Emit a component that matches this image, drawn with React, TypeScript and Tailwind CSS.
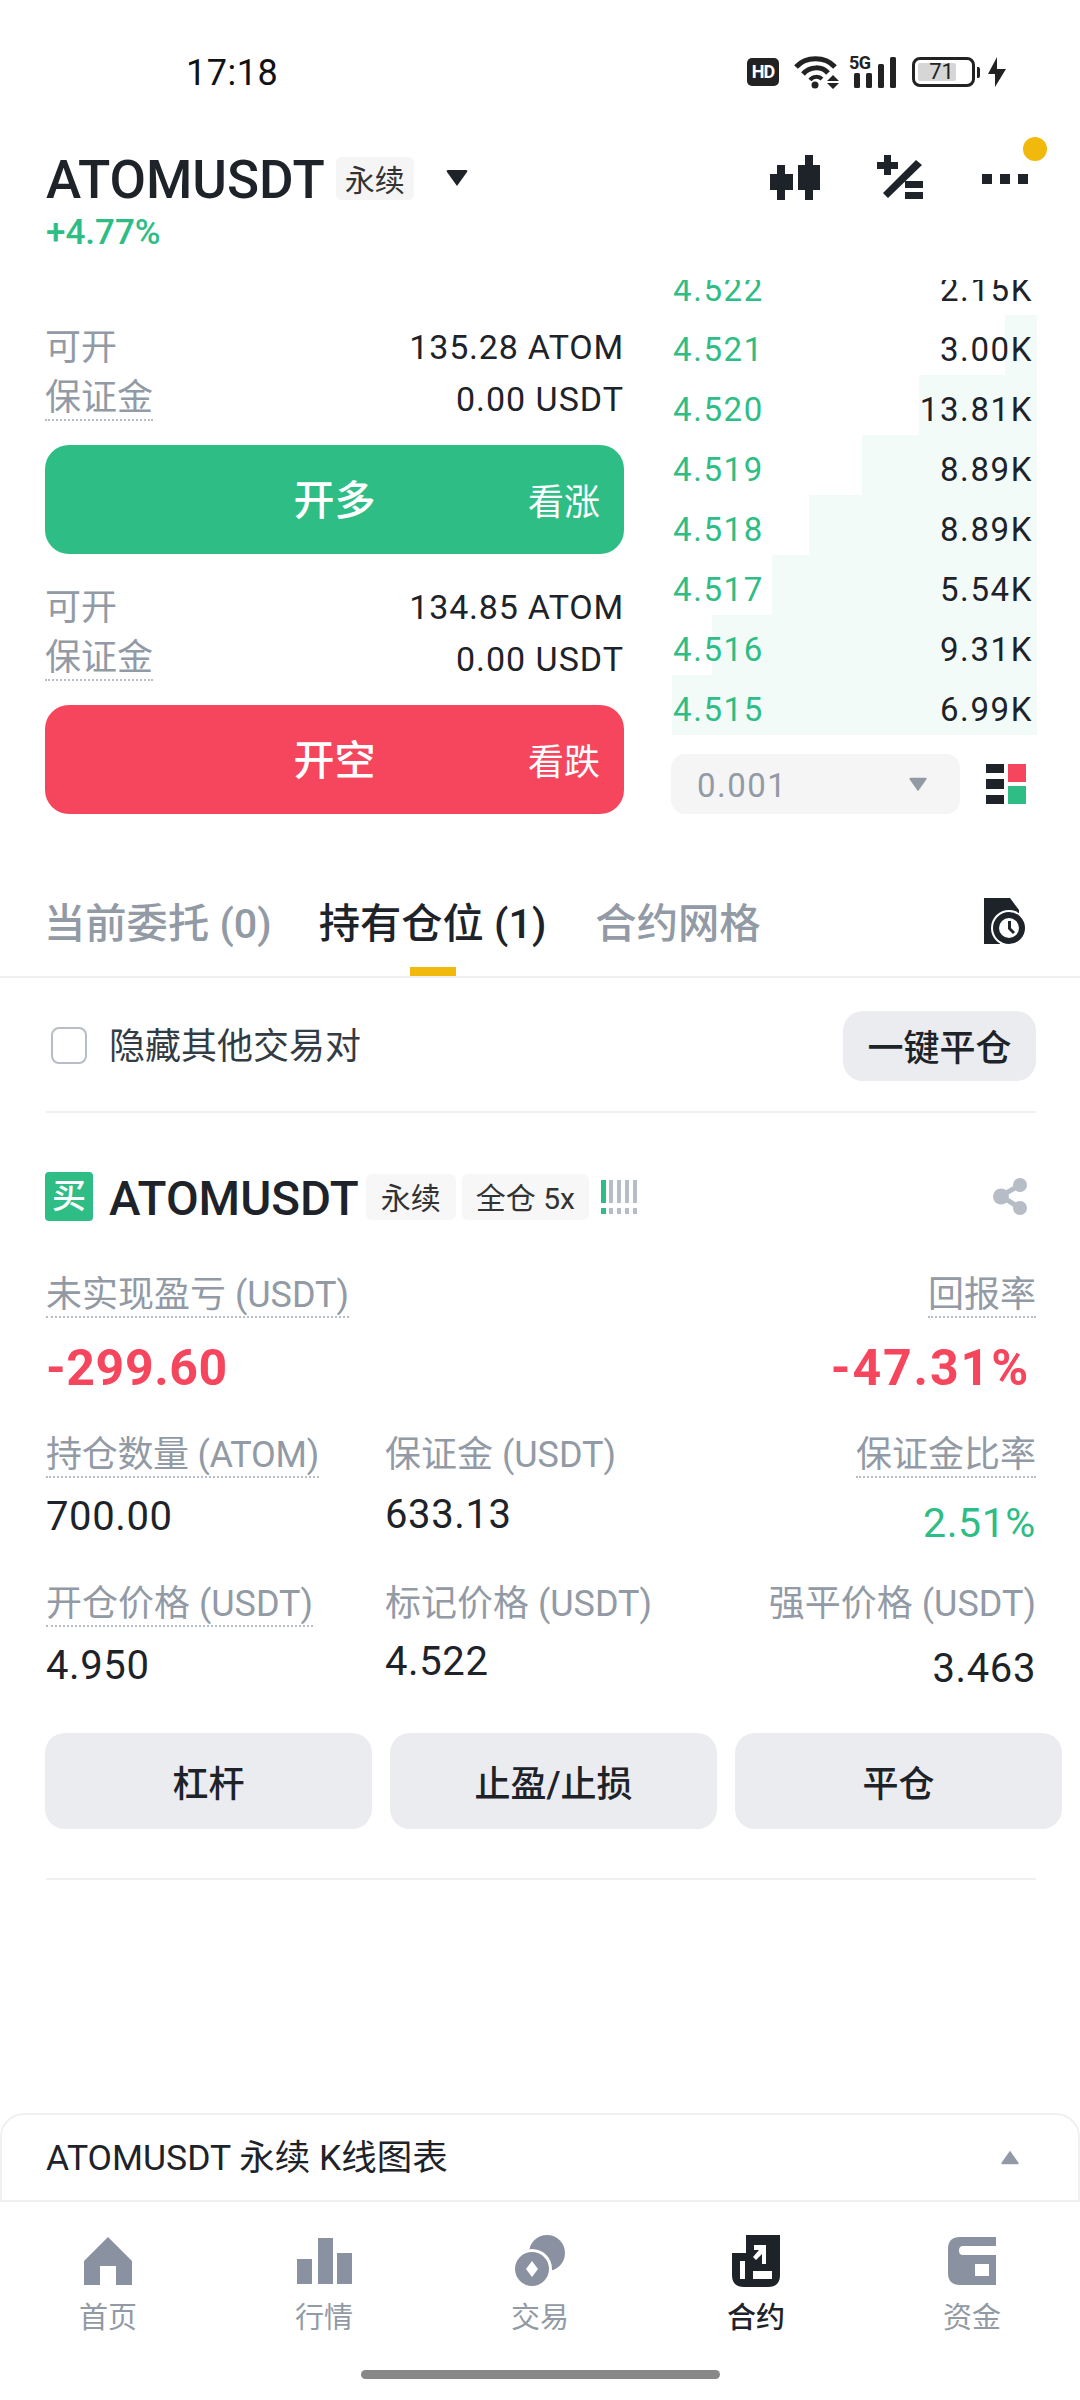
import React from "react";

const asks = [
  { p: "4.522", q: "2.15K", w: 0 },
  { p: "4.521", q: "3.00K", w: 32 },
  { p: "4.520", q: "13.81K", w: 118 },
  { p: "4.519", q: "8.89K", w: 175 },
  { p: "4.518", q: "8.89K", w: 228 },
  { p: "4.517", q: "5.54K", w: 265 },
  { p: "4.516", q: "9.31K", w: 325 },
  { p: "4.515", q: "6.99K", w: 365 },
];

function Label({ children, dotted = true }: { children: React.ReactNode; dotted?: boolean }) {
  return (
    <span className={`inline-block h-[48px] pt-[2px] text-[36px] leading-[46px] text-[#929aa5] whitespace-nowrap ${dotted ? "border-b-2 border-dotted border-[#b7bdc6]" : ""}`}>
      {children}
    </span>
  );
}

function Tri({ className, color, up = false }: { className: string; color: string; up?: boolean }) {
  return (
    <svg viewBox="0 0 24 18" className={className}>
      <path d={up ? "M12 1 22 15Q23 17 21 17H3Q1 17 2 15Z" : "M12 17 22 3Q23 1 21 1H3Q1 1 2 3Z"} fill={color} />
    </svg>
  );
}

function StatusBar() {
  return (
    <div className="h-[144px] shrink-0 flex items-center pl-[186px] pr-[74px] justify-between text-[#111]">
      <span className="text-[36px] leading-[44px] tracking-[0.5px] pt-[2px]">17:18</span>
      <div className="flex items-center">
        <span className="w-[32px] h-[28px] rounded-[5px] bg-[#222] text-white text-[18px] leading-[28px] font-bold text-center tracking-[-1px]">HD</span>
        <svg viewBox="0 0 46 34" className="w-[46px] h-[34px] ml-[15px]">
          <path d="M2 12C12 1 31 1 41 12" fill="none" stroke="#222" strokeWidth="5" />
          <path d="M9 19C16 11 28 11 34 18" fill="none" stroke="#222" strokeWidth="5" />
          <path d="M16 25C19 21 25 21 28 24" fill="none" stroke="#222" strokeWidth="4" />
          <circle cx="21" cy="30" r="3.5" fill="#222" />
          <path d="M39 20 45 26H33ZM33 28H45L39 34Z" fill="#222" />
        </svg>
        <div className="relative w-[48px] h-[32px] ml-[11px]">
          <span className="absolute left-[-2px] top-[-3px] text-[18px] leading-[19px] font-bold tracking-[-0.5px] text-[#222]">5G</span>
          <svg viewBox="0 0 48 32" className="w-[48px] h-[32px]">
            <rect x="3" y="17" width="6" height="15" rx="1.5" fill="#222" />
            <rect x="15" y="17" width="6" height="15" rx="1.5" fill="#222" />
            <rect x="27" y="8" width="6" height="24" rx="1.5" fill="#222" />
            <rect x="39" y="1" width="6" height="31" rx="1.5" fill="#222" />
          </svg>
        </div>
        <div className="relative w-[63px] h-[30px] ml-[13px] border-[3px] border-[#222] rounded-[8px] p-[3px]">
          <div className="w-[38px] h-full bg-[#d6d6d6] rounded-[2px]" />
          <span className="absolute inset-0 text-center text-[22px] leading-[24px] text-[#222] pr-[4px]">71</span>
          <span className="absolute right-[-8px] top-[7px] w-[3px] h-[11px] bg-[#222] rounded-r-[2px]" />
        </div>
        <svg viewBox="0 0 18 30" className="w-[18px] h-[30px] ml-[13px]">
          <path d="M9 0V12H18L7 30V17H0Z" fill="#222" />
        </svg>
      </div>
    </div>
  );
}

function Header() {
  return (
    <div className="h-[136px] shrink-0 pl-[46px] relative">
      <div className="flex items-center h-[68px]">
        <span className="text-[53px] leading-[68px] pt-[3px] font-medium text-[#1e2329]">ATOMUSDT</span>
        <span className="ml-[11px] w-[78px] h-[43px] rounded-[6px] bg-[#f5f5f5] text-[30px] leading-[43px] pt-[2px] text-center text-[#333]">永续</span>
        <Tri className="w-[24px] h-[18px] ml-[31px]" color="#1e2329" />
      </div>
      <div className="h-[40px] text-[35px] leading-[40px] pt-[1px] font-medium text-[#2ebd85]">+4.77%</div>
      <svg viewBox="0 0 60 50" className="absolute left-[770px] top-[11px] w-[60px] h-[50px]">
        <path d="M7 10H15V19H23V35H15V45H7V35H0V19H7ZM35 0H43V10H50V35H43V45H35V35H28V10H35Z" fill="#1e2329" />
      </svg>
      <svg viewBox="0 0 50 48" className="absolute left-[877px] top-[11px] w-[50px] h-[48px]">
        <path d="M7 0H14V7H21V14H14V20H7V14H0V7H7ZM39 5 45 10 11 43 6 38ZM28 26H46V33H28ZM28 37H46V44H28Z" fill="#1e2329" />
      </svg>
      <div className="absolute left-[982px] top-[30px] flex gap-[8px]">
        <span className="w-[10px] h-[10px] bg-[#1e2329]" />
        <span className="w-[10px] h-[10px] bg-[#1e2329]" />
        <span className="w-[10px] h-[10px] bg-[#1e2329]" />
      </div>
      <span className="absolute left-[1023px] top-[-7px] w-[24px] h-[24px] rounded-full bg-[#f0b90b]" />
    </div>
  );
}

function OpenBlock({ qty, action, hint, color }: { qty: string; action: string; hint: string; color: string }) {
  return (
    <div>
      <div className="flex justify-between items-center h-[52px]">
        <span className="text-[36px] pt-[2px] text-[#929aa5]">可开</span>
        <span className="text-[34px] tracking-[0.8px] pt-[1px] text-[#1e2329]">{qty}</span>
      </div>
      <div className="flex justify-between h-[52px]">
        <Label>保证金</Label>
        <span className="text-[34px] leading-[52px] tracking-[1px] text-[#1e2329]">0.00 USDT</span>
      </div>
      <div className={`relative h-[109px] mt-[20px] rounded-[24px] flex items-center justify-center text-white ${color}`}>
        <span className="text-[41px] pt-[4px] font-medium">{action}</span>
        <span className="absolute right-[24px] top-[34px] text-[36px] leading-[48px]">{hint}</span>
      </div>
    </div>
  );
}

function Trade() {
  return (
    <div className="h-[534px] shrink-0 flex pl-[45px] pr-[43px]">
      <div className="w-[579px] pt-[41px] flex flex-col gap-[27px]">
        <OpenBlock qty="135.28 ATOM" action="开多" hint="看涨" color="bg-[#2ebd85]" />
        <OpenBlock qty="134.85 ATOM" action="开空" hint="看跌" color="bg-[#f6465d]" />
      </div>
      <div className="w-[367px] ml-[46px]">
        <div className="h-[455px] overflow-hidden flex flex-col justify-end">
          {asks.map((r) => (
            <div key={r.p} className="relative h-[60px] shrink-0 flex items-center justify-between pl-[3px] pr-[4px] text-[33px] tracking-[1.6px]">
              <div className="absolute right-0 top-0 bottom-0 bg-[#f3fbf8]" style={{ width: r.w }} />
              <span className="relative text-[#2ebd85] mt-[9px]">{r.p}</span>
              <span className="relative text-[#1e2329] mt-[9px]">{r.q}</span>
            </div>
          ))}
        </div>
        <div className="flex items-center mt-[19px]">
          <div className="w-[289px] h-[60px] rounded-[14px] bg-[#f5f5f5] flex items-center justify-between pl-[26px] pr-[32px] ml-[1px]">
            <span className="text-[33px] pt-[3px] tracking-[1.5px] text-[#929aa5]">0.001</span>
            <Tri className="w-[20px] h-[15px]" color="#929aa5" />
          </div>
          <svg viewBox="0 0 40 40" className="w-[40px] h-[40px] ml-[26px]">
            <path d="M0 0H18V9H0ZM0 15H18V25H0ZM0 31H18V40H0Z" fill="#1e2329" />
            <rect x="22" y="0" width="18" height="18" fill="#f6465d" />
            <rect x="22" y="22" width="18" height="18" fill="#2ebd85" />
          </svg>
        </div>
      </div>
    </div>
  );
}

function Tabs() {
  const t = "text-[41.3px] leading-[52px] pt-[2px] font-medium whitespace-nowrap";
  return (
    <div className="h-[164px] shrink-0 border-b-2 border-[#f0f0f0] pt-[82px] pl-[44px] pr-[54px] flex items-start">
      <span className={`${t} text-[#929aa5]`}>当前委托 (0)</span>
      <div className="ml-[47px] flex flex-col items-center">
        <span className={`${t} text-[#1e2329]`}>持有仓位 (1)</span>
        <span className="mt-[17px] w-[46px] h-[9px] bg-[#f0b90b]" />
      </div>
      <span className={`ml-[49px] ${t} text-[#929aa5]`}>合约网格</span>
      <svg viewBox="0 0 42 46" className="ml-auto w-[42px] h-[46px] mt-[2px]">
        <path d="M0 0H26L35 12V40H0Z" fill="#1e2329" transform="translate(0 0)" />
        <path d="M0 46H16V40H0Z" fill="#1e2329" />
        <circle cx="25" cy="30" r="18" fill="#fff" />
        <circle cx="25" cy="30" r="16" fill="#1e2329" />
        <circle cx="25" cy="30" r="10" fill="#fff" />
        <path d="M24 23H27V30L31 34 29 36 24 31Z" fill="#1e2329" />
      </svg>
    </div>
  );
}

function PositionCard() {
  const val = "text-[40px] leading-[50px] tracking-[0.6px] text-[#1e2329]";
  return (
    <div className="pl-[46px] pr-[44px]">
      <div className="h-[135px] pt-[2px] flex items-center border-b-2 border-[#f0f0f0]">
        <span className="w-[36px] h-[37px] ml-[5px] rounded-[8px] border-2 border-[#b7bdc6]" />
        <span className="ml-[22px] text-[36px] pt-[3px] text-[#333b44]">隐藏其他交易对</span>
        <span className="ml-auto w-[193px] h-[70px] rounded-[20px] bg-[#eaecef] text-[36px] leading-[70px] pt-[3px] text-center font-medium text-[#1e2329]">一键平仓</span>
      </div>

      <div className="relative mt-[59px] h-[49px] flex items-center">
        <span className="ml-[-1px] w-[48px] h-[49px] rounded-[4px] bg-[#2ebd85] text-white text-[34px] leading-[49px] text-center font-medium">买</span>
        <span className="ml-[16px] text-[47.5px] pt-[4px] font-medium text-[#1e2329] leading-[56px]">ATOMUSDT</span>
        <span className="ml-[7px] w-[90px] h-[46px] rounded-[6px] bg-[#f7f7f7] text-[30px] leading-[46px] pt-[2px] text-center text-[#333]">永续</span>
        <span className="ml-[6px] w-[127px] h-[46px] rounded-[6px] bg-[#f7f7f7] text-[30px] leading-[46px] pt-[2px] text-center text-[#333]">全仓 5x</span>
        <svg viewBox="0 0 36 34" className="ml-[12px] w-[36px] h-[34px]">
          <path d="M0 0H5V23H0ZM0 28H5V34H0Z" fill="#2ebd85" />
          <path d="M8 0H12V23H8ZM8 28H12V34H8ZM16 0H20V23H16ZM16 28H20V34H16ZM24 0H28V23H24ZM24 28H28V34H24ZM32 0H36V23H32ZM32 28H36V34H32Z" fill="#b7bdc6" />
        </svg>
        <svg viewBox="0 0 35 37" className="absolute left-[947px] top-[6px] w-[35px] h-[37px]">
          <path d="M27 7 8 18 27 30" fill="none" stroke="#b7bdc6" strokeWidth="5" />
          <circle cx="27" cy="7" r="7" fill="#b7bdc6" />
          <circle cx="8" cy="18.5" r="8" fill="#b7bdc6" />
          <circle cx="27" cy="30" r="7" fill="#b7bdc6" />
        </svg>
      </div>

      <div className="mt-[49px] flex justify-between">
        <Label>未实现盈亏 (USDT)</Label>
        <Label>回报率</Label>
      </div>
      <div className="mt-[20px] h-[60px] flex justify-between text-[50px] leading-[60px] font-bold text-[#f6465d] tracking-[0.6px]">
        <span>-299.60</span>
        <span className="tracking-[1.9px] pr-[6px]">-47.31%</span>
      </div>

      <div className="mt-[32px] grid grid-cols-[339px_1fr_auto]">
        <div><span className="inline-block w-[270px] tracking-[-0.3px]"><Label>持仓数量 (ATOM)</Label></span></div>
        <div><Label dotted={false}>保证金 (USDT)</Label></div>
        <div className="text-right"><Label>保证金比率</Label></div>
        <div className={`mt-[14px] ${val}`}>700.00</div>
        <div className={`mt-[12px] ${val}`}>633.13</div>
        <div className="mt-[20px] text-right text-[41px] leading-[50px] tracking-[0.6px] text-[#2ebd85]">2.51%</div>
      </div>

      <div className="mt-[31px] grid grid-cols-[339px_1fr_auto]">
        <div><Label>开仓价格 (USDT)</Label></div>
        <div><Label dotted={false}>标记价格 (USDT)</Label></div>
        <div className="text-right"><Label dotted={false}>强平价格 (USDT)</Label></div>
        <div className={`mt-[14px] ${val}`}>4.950</div>
        <div className={`mt-[10px] ${val}`}>4.522</div>
        <div className={`mt-[17px] text-right ${val}`}>3.463</div>
      </div>

      <div className="mt-[39px] flex gap-[18px] ml-[-1px]">
        {["杠杆", "止盈/止损", "平仓"].map((t) => (
          <span key={t} className="w-[327px] h-[96px] shrink-0 rounded-[20px] bg-[#eaecef] text-[36px] leading-[96px] pt-[4px] text-center font-medium text-[#1e2329]">
            {t}
          </span>
        ))}
      </div>
      <div className="mt-[49px] h-[2px] bg-[#f0f0f0]" />
    </div>
  );
}

function NavIcon({ i }: { i: number }) {
  const g = "#8a91a0";
  if (i === 0)
    return (
      <svg viewBox="0 0 48 48" className="w-[48px] h-[48px]">
        <path d="M24 0 48 24V48H32V29H16V48H0V24Z" fill={g} />
      </svg>
    );
  if (i === 1)
    return (
      <svg viewBox="0 0 55 46" className="w-[55px] h-[46px]">
        <path d="M0 21H15V46H0ZM21 0H36V46H21ZM40 15H55V46H40Z" fill={g} />
      </svg>
    );
  if (i === 2)
    return (
      <svg viewBox="0 0 52 52" className="w-[52px] h-[52px]">
        <ellipse cx="33" cy="18" rx="18" ry="18" fill={g} />
        <circle cx="18" cy="34" r="20" fill="#fff" />
        <circle cx="18" cy="34" r="17" fill={g} />
        <path d="M18 26 24 34 18 42 12 34Z" fill="#fff" />
      </svg>
    );
  if (i === 3)
    return (
      <svg viewBox="0 0 48 52" className="w-[48px] h-[52px]">
        <path d="M14 0H48V40Q48 52 36 52H12Q0 52 0 40V18H14Z" fill="#1e2329" />
        <path d="M8 26H13V44H8ZM21 36H40V44H21ZM34 10V29H30V19L24 25 21 22 27 15H22V10Z" fill="#fff" />
      </svg>
    );
  return (
    <svg viewBox="0 0 48 48" className="w-[48px] h-[48px]">
      <path d="M12 0H48V48H12Q0 48 0 36V12Q0 0 12 0Z" fill={g} />
      <path d="M48 9H15Q11 9 11 13.5T15 18H48ZM27 27H41V39H27Z" fill="#fff" />
    </svg>
  );
}

function Bottom() {
  const items = ["首页", "行情", "交易", "合约", "资金"];
  return (
    <>
      <div className="h-[87px] shrink-0 rounded-t-[24px] border-2 border-b-0 border-[#f0f0f0] flex items-center pl-[44px] pr-[58px] justify-between">
        <span className="text-[35.5px] pt-[3px] text-[#1e2329]">ATOMUSDT 永续 K线图表</span>
        <Tri className="w-[20px] h-[15px]" color="#929aa5" up />
      </div>
      <div className="h-[200px] shrink-0 border-t-2 border-[#f0f0f0] pt-[33px]">
        <div className="grid grid-cols-5">
          {items.map((t, i) => (
            <div key={t} className="flex flex-col items-center">
              <div className="h-[52px] flex items-center justify-center">
                <NavIcon i={i} />
              </div>
              <span className={`mt-[15px] text-[29px] leading-[33px] ${i === 3 ? "text-[#1e2329] font-medium" : "text-[#929aa5]"}`}>{t}</span>
            </div>
          ))}
        </div>
        <div className="mx-auto mt-[35px] w-[359px] h-[9px] rounded-full bg-[#888]" />
      </div>
    </>
  );
}

export default function App() {
  return (
    <div className="w-[1080px] h-[2400px] overflow-hidden bg-white flex flex-col font-['Roboto','Noto_Sans_CJK_SC',sans-serif]">
      <StatusBar />
      <Header />
      <Trade />
      <Tabs />
      <PositionCard />
      <div className="flex-1" />
      <Bottom />
    </div>
  );
}
